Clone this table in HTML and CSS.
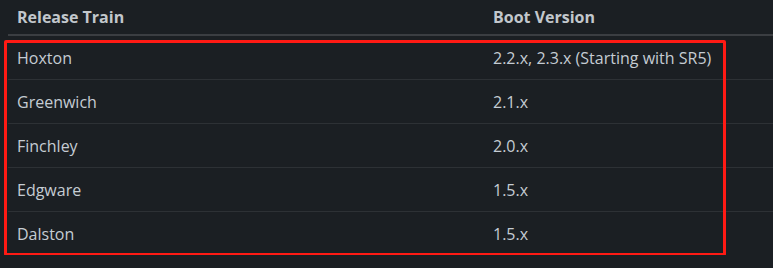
FILE: index.html
```html
<!DOCTYPE html>
<html>
<head>
<meta charset="utf-8">
<link rel="stylesheet" href="styles.css">
</head>
<body>
<div class="wrap">
<table class="versions">
  <thead>
    <tr><th>Release Train</th><th>Boot Version</th></tr>
  </thead>
  <tbody>
    <tr><td>Hoxton</td><td>2.2.x, 2.3.x (Starting with SR5)</td></tr>
    <tr><td>Greenwich</td><td>2.1.x</td></tr>
    <tr><td>Finchley</td><td>2.0.x</td></tr>
    <tr><td>Edgware</td><td>1.5.x</td></tr>
    <tr><td>Dalston</td><td>1.5.x</td></tr>
  </tbody>
</table>
<div class="highlight"></div>
</div>
</body>
</html>
```

FILE: styles.css
```css
html, body {
  margin: 0;
  background: #1b1f23;
}
body {
  padding: 0 0 0 8px;
  font-family: "Open Sans", "Liberation Sans", sans-serif;
  font-size: 16px;
  color: #c5ccd3;
}
.wrap {
  position: relative;
}
.versions {
  width: 765px;
  border-collapse: collapse;
}
.versions th {
  text-align: left;
  font-weight: 700;
  color: #c2c7cc;
  height: 35px;
  padding: 0 9px;
  box-sizing: border-box;
  border-bottom: 2px solid #3b3e42;
}
.versions td {
  height: 43px;
  padding: 0 9px;
  border-bottom: 1px solid #2d3135;
}
.versions tr:last-child td {
  border-bottom: none;
}
.versions th:first-child, .versions td:first-child {
  width: 458px;
}
.highlight {
  position: absolute;
  left: -4px;
  top: 40px;
  width: 722px;
  height: 216px;
  box-sizing: border-box;
  border: 3px solid #ff1a14;
  border-radius: 2px;
}
```
